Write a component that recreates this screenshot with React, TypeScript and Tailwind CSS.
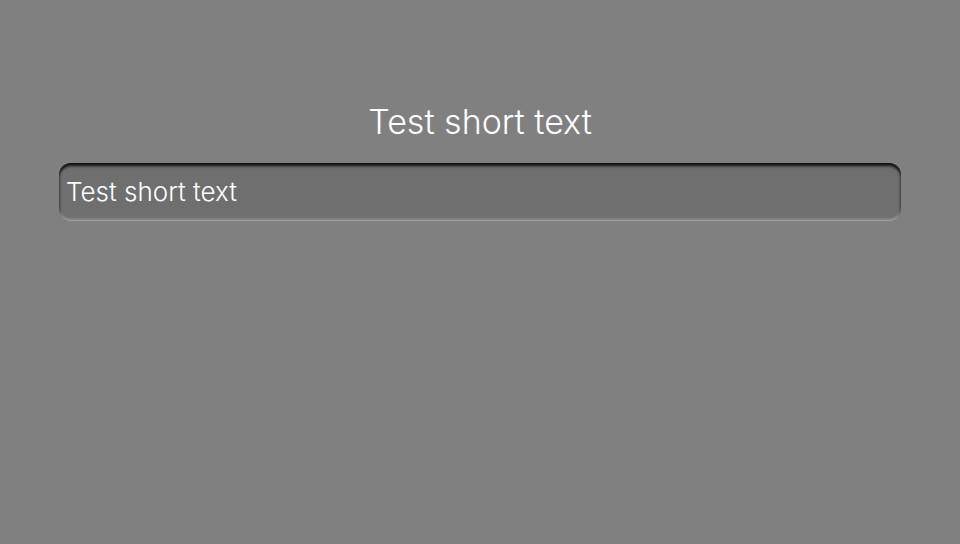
import { useState } from "react";

export default function App() {
  const [text, setText] = useState("Test short text");

  return (
    <main className="min-h-screen bg-[#808080] px-[59px] pt-[98px] font-['Inter','Liberation_Sans',sans-serif] font-light text-white">
      <label htmlFor="entry" className="block text-center text-[34px] leading-[48px]">
        {text}
      </label>
      <input
        id="entry"
        type="text"
        value={text}
        onChange={(event) => setText(event.target.value)}
        className="mt-[17px] block h-[58px] w-full rounded-xl bg-[#6f6f6f] px-[7px] pb-[2px] text-[26px] text-white shadow-[inset_0_3px_3px_#101010,inset_0_-1px_1px_#a4a4a4,inset_0_-3px_2px_#848484,inset_1px_0_2px_#585858,inset_-1px_0_2px_#585858] outline-none"
      />
    </main>
  );
}
